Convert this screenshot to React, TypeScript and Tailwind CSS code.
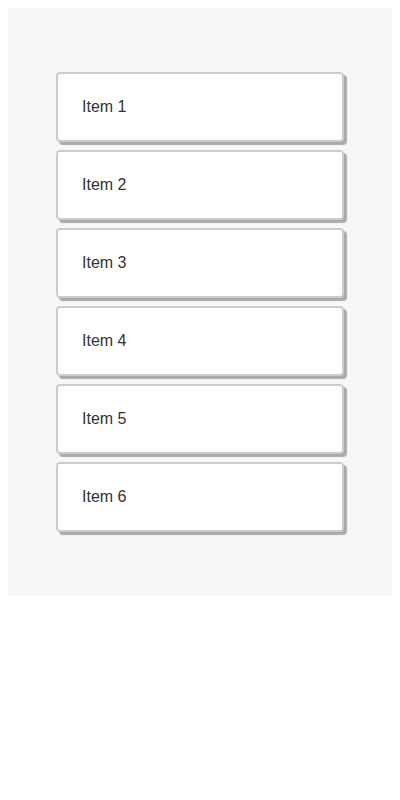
const items = ['Item 1', 'Item 2', 'Item 3', 'Item 4', 'Item 5', 'Item 6']

const App = () => {
  return (
    <div className="bg-white p-2 font-['Liberation_Sans',Arial,sans-serif]">
      <div className="flex flex-col gap-2 bg-[#f7f7f7] px-12 py-16">
        {items.map((item) => (
          <div
            key={item}
            className="flex h-[70px] items-center rounded border-2 border-[#cccccc] bg-white px-6 text-base text-[#333333] shadow-[3px_3px_1px_#aaaaaa]"
          >
            {item}
          </div>
        ))}
      </div>
    </div>
  )
}

export default App
